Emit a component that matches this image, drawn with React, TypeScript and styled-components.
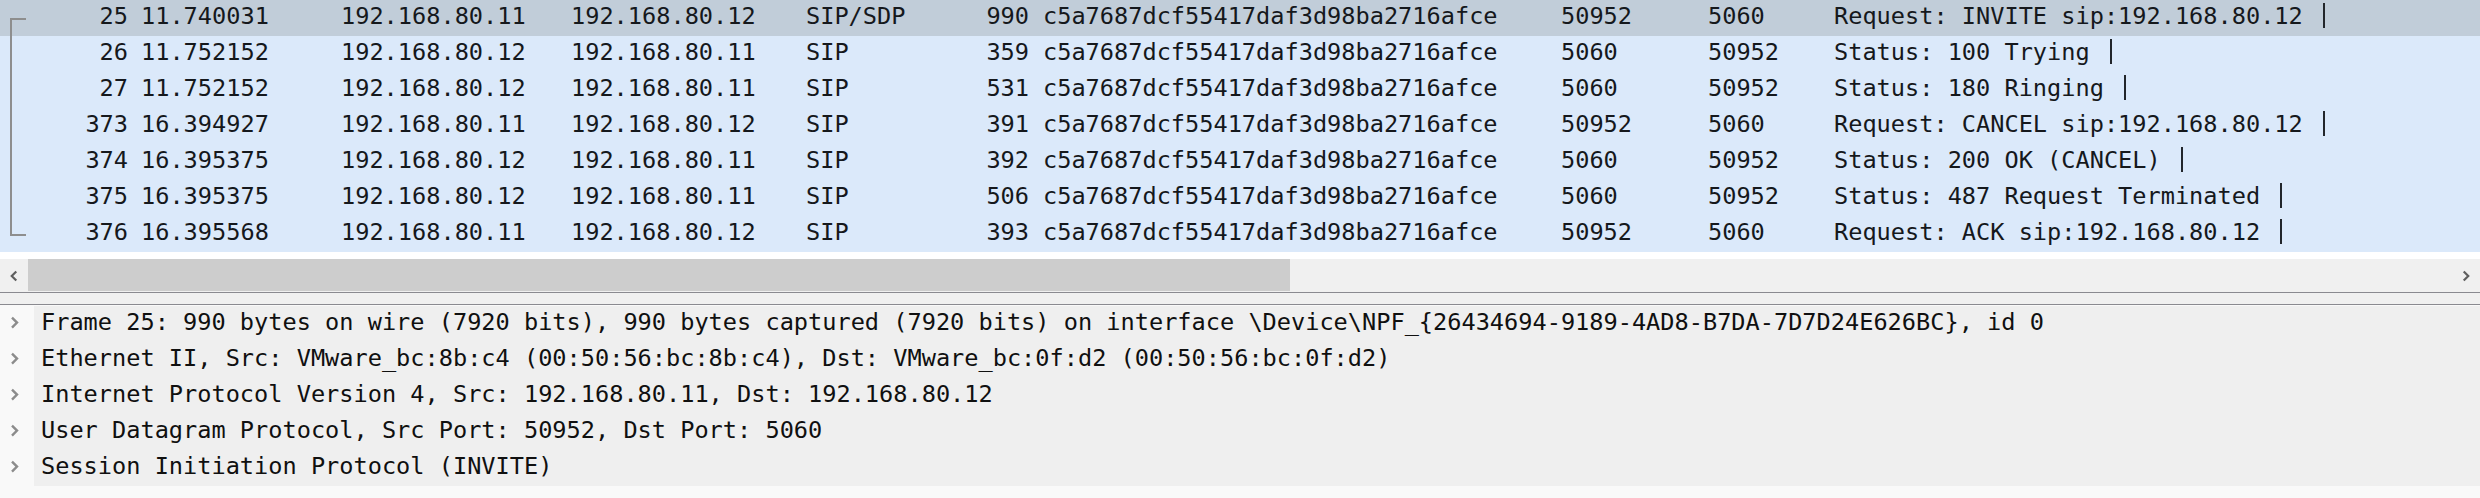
import React from "react";
import styled, { createGlobalStyle } from "styled-components";

const Global = createGlobalStyle`
  html, body { margin: 0; padding: 0; background: #ffffff; }
  body { width: 2480px; height: 498px; overflow: hidden; }
`;

const Page = styled.div`
  width: 2480px;
  height: 498px;
  display: flex;
  flex-direction: column;
  background: #ffffff;
  font-family: "DejaVu Sans Mono", "Liberation Mono", monospace;
  font-size: 23.6px;
  color: #15181c;
`;

const PacketList = styled.div`
  display: flex;
  flex-direction: column;
  padding-bottom: 7px;
  background: #ffffff;
`;

const Row = styled.div<{ $selected?: boolean }>`
  display: grid;
  grid-template-columns: 141px 200px 230px 235px 154px 83px 518px 147px 126px 1fr;
  height: 36px;
  line-height: 32px;
  background: ${(p) => (p.$selected ? "#c1cdd9" : "#dbe9fa")};
  white-space: pre;
`;

const Cell = styled.div<{ $right?: boolean; $padRight?: number }>`
  overflow: visible;
  text-align: ${(p) => (p.$right ? "right" : "left")};
  padding-right: ${(p) => p.$padRight ?? 0}px;
`;

const NoCell = styled.div`
  display: flex;
  align-items: flex-start;
  padding-right: 13px;
`;

const NoText = styled.span`
  flex: 1;
  text-align: right;
`;

const Bracket = styled.svg`
  width: 28px;
  height: 36px;
  flex: none;
  display: block;
`;

const InfoBar = styled.span`
  display: inline-block;
  width: 2px;
  height: 25px;
  margin-left: 20px;
  background: #22262b;
  vertical-align: -4px;
`;

const ScrollBar = styled.div`
  display: flex;
  height: 33px;
  background: #f0f0f0;
`;

const ArrowButton = styled.div`
  width: 28px;
  flex: none;
  display: flex;
  align-items: center;
  justify-content: center;
`;

const Thumb = styled.div`
  width: 1262px;
  margin-bottom: 1px;
  background: #cdcdcd;
`;

const Track = styled.div`
  flex: 1;
`;

const Splitter = styled.div`
  height: 11px;
  background: #f0f0f0;
  border-top: 1px solid #8a8a90;
  border-bottom: 1px solid #8a8a90;
`;

const Details = styled.div`
  flex: 1;
  display: flex;
  flex-direction: column;
  padding-top: 1px;
  background: #f9f9f9;
`;

const DetailRow = styled.div`
  display: flex;
  height: 36px;
  line-height: 32px;
  white-space: pre;
`;

const Expander = styled.div`
  width: 34px;
  flex: none;
  display: flex;
  align-items: center;
  justify-content: center;
  padding-bottom: 3px;
  padding-right: 6px;
  box-sizing: border-box;
`;

const DetailText = styled.div`
  flex: 1;
  padding-left: 7px;
  background: #efefef;
  color: #101010;
`;

type Pkt = {
  no: string;
  time: string;
  src: string;
  dst: string;
  proto: string;
  len: string;
  sport: string;
  dport: string;
  info: string;
};

const CALL = "c5a7687dcf55417daf3d98ba2716afce";
const A = "192.168.80.11";
const B = "192.168.80.12";

const packets: Pkt[] = [
  { no: "25", time: "11.740031", src: A, dst: B, proto: "SIP/SDP", len: "990", sport: "50952", dport: "5060", info: "Request: INVITE sip:192.168.80.12" },
  { no: "26", time: "11.752152", src: B, dst: A, proto: "SIP", len: "359", sport: "5060", dport: "50952", info: "Status: 100 Trying" },
  { no: "27", time: "11.752152", src: B, dst: A, proto: "SIP", len: "531", sport: "5060", dport: "50952", info: "Status: 180 Ringing" },
  { no: "373", time: "16.394927", src: A, dst: B, proto: "SIP", len: "391", sport: "50952", dport: "5060", info: "Request: CANCEL sip:192.168.80.12" },
  { no: "374", time: "16.395375", src: B, dst: A, proto: "SIP", len: "392", sport: "5060", dport: "50952", info: "Status: 200 OK (CANCEL)" },
  { no: "375", time: "16.395375", src: B, dst: A, proto: "SIP", len: "506", sport: "5060", dport: "50952", info: "Status: 487 Request Terminated" },
  { no: "376", time: "16.395568", src: A, dst: B, proto: "SIP", len: "393", sport: "50952", dport: "5060", info: "Request: ACK sip:192.168.80.12" },
];

const details = [
  "Frame 25: 990 bytes on wire (7920 bits), 990 bytes captured (7920 bits) on interface \\Device\\NPF_{26434694-9189-4AD8-B7DA-7D7D24E626BC}, id 0",
  "Ethernet II, Src: VMware_bc:8b:c4 (00:50:56:bc:8b:c4), Dst: VMware_bc:0f:d2 (00:50:56:bc:0f:d2)",
  "Internet Protocol Version 4, Src: 192.168.80.11, Dst: 192.168.80.12",
  "User Datagram Protocol, Src Port: 50952, Dst Port: 5060",
  "Session Initiation Protocol (INVITE)",
];

function BracketMark({ kind }: { kind: "first" | "mid" | "last" }) {
  const d =
    kind === "first" ? "M26 19 H11 V36" : kind === "last" ? "M11 0 V19 H26" : "M11 0 V36";
  return (
    <Bracket viewBox="0 0 28 36">
      <path d={d} fill="none" stroke="#8e8e8e" strokeWidth="2" />
    </Bracket>
  );
}

function Chevron({ dir, color, size }: { dir: "left" | "right"; color: string; size: number }) {
  const pts = dir === "right" ? "3,1 8,6 3,11" : "8,1 3,6 8,11";
  return (
    <svg width={size} height={size * 1.2} viewBox="0 0 11 12">
      <polyline points={pts} fill="none" stroke={color} strokeWidth="2.4" strokeLinejoin="miter" />
    </svg>
  );
}

export default function App() {
  return (
    <Page>
      <Global />
      <PacketList>
        {packets.map((p, i) => (
          <Row key={p.no} $selected={i === 0}>
            <NoCell>
              <BracketMark kind={i === 0 ? "first" : i === packets.length - 1 ? "last" : "mid"} />
              <NoText>{p.no}</NoText>
            </NoCell>
            <Cell>{p.time}</Cell>
            <Cell>{p.src}</Cell>
            <Cell>{p.dst}</Cell>
            <Cell>{p.proto}</Cell>
            <Cell $right $padRight={14}>{p.len}</Cell>
            <Cell>{CALL}</Cell>
            <Cell>{p.sport}</Cell>
            <Cell>{p.dport}</Cell>
            <Cell>
              {p.info}
              <InfoBar />
            </Cell>
          </Row>
        ))}
      </PacketList>
      <ScrollBar>
        <ArrowButton>
          <Chevron dir="left" color="#5f5f5f" size={10} />
        </ArrowButton>
        <Thumb />
        <Track />
        <ArrowButton>
          <Chevron dir="right" color="#5f5f5f" size={10} />
        </ArrowButton>
      </ScrollBar>
      <Splitter />
      <Details>
        {details.map((t) => (
          <DetailRow key={t}>
            <Expander>
              <Chevron dir="right" color="#8c8c8c" size={11} />
            </Expander>
            <DetailText>{t}</DetailText>
          </DetailRow>
        ))}
      </Details>
    </Page>
  );
}
